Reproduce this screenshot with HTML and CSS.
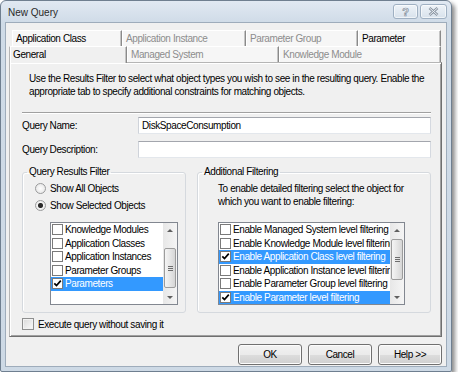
FILE: index.html
```html
<!DOCTYPE html>
<html lang="en">
<head>
    <meta charset="UTF-8">
    <title>New Query</title>
    <link rel="stylesheet" href="styles.css">
</head>
<body>
<div class="window">
    <div class="titlebar">
        <span class="title">New Query</span>
        <div class="caption-buttons">
            <button class="cap-btn help-btn">?</button>
            <button class="cap-btn close-btn">
                <svg width="11" height="9" viewBox="0 0 11 9">
                    <path d="M1.5 1 9.5 8 M9.5 1 1.5 8" stroke="#8893a0" stroke-width="2.6" fill="none"/>
                    <path d="M1.5 1 9.5 8 M9.5 1 1.5 8" stroke="#eef2f6" stroke-width="1" fill="none"/>
                </svg>
            </button>
        </div>
    </div>
    <div class="client">
        <div class="tabs">
            <div class="tab-row back">
                <div class="tab">Application Class</div>
                <div class="tab disabled">Application Instance</div>
                <div class="tab disabled">Parameter Group</div>
                <div class="tab">Parameter</div>
            </div>
            <div class="tab-row front">
                <div class="tab active">General</div>
                <div class="tab disabled">Managed System</div>
                <div class="tab disabled">Knowledge Module</div>
            </div>
        </div>
        <div class="panel">
            <p class="intro">Use the Results Filter to select what object types you wish to see in the resulting query. Enable the<br>appropriate tab to specify additional constraints for matching objects.</p>
            <div class="sep"></div>
            <div class="field">
                <label for="query_name">Query Name:</label>
                <input type="text" id="query_name" value="DiskSpaceConsumption">
            </div>
            <div class="field">
                <label for="query_description">Query Description:</label>
                <input type="text" id="query_description">
            </div>
            <div class="groups">
                <fieldset class="group results">
                    <legend>Query Results Filter</legend>
                    <div class="radio"><span class="dot"></span>Show All Objects</div>
                    <div class="radio checked"><span class="dot"></span>Show Selected Objects</div>
                    <div class="listbox">
                        <ul class="items">
                            <li class="item"><span class="box"></span>Knowledge Modules</li>
                            <li class="item"><span class="box"></span>Application Classes</li>
                            <li class="item"><span class="box"></span>Application Instances</li>
                            <li class="item"><span class="box"></span>Parameter Groups</li>
                            <li class="item selected"><span class="box"><svg width="9" height="9" viewBox="0 0 9 9"><path d="M1.3 4.3 3.5 6.6 7.8 1.6" stroke="#000" stroke-width="1.7" fill="none"/></svg></span>Parameters</li>
                        </ul>
                        <div class="scrollbar">
                            <div class="sb-arrow up"></div>
                            <div class="sb-track"><div class="sb-thumb thumb-results"><span class="grip"></span></div></div>
                            <div class="sb-arrow down"></div>
                        </div>
                    </div>
                </fieldset>
                <fieldset class="group filtering">
                    <legend>Additional Filtering</legend>
                    <p class="hint">To enable detailed filtering select the object for<br>which you want to enable filtering:</p>
                    <div class="listbox">
                        <ul class="items">
                            <li class="item"><span class="box"></span>Enable Managed System level filtering</li>
                            <li class="item"><span class="box"></span>Enable Knowledge Module level filtering</li>
                            <li class="item selected"><span class="box"><svg width="9" height="9" viewBox="0 0 9 9"><path d="M1.3 4.3 3.5 6.6 7.8 1.6" stroke="#000" stroke-width="1.7" fill="none"/></svg></span>Enable Application Class level filtering</li>
                            <li class="item"><span class="box"></span>Enable Application Instance level filtering</li>
                            <li class="item"><span class="box"></span>Enable Parameter Group level filtering</li>
                            <li class="item selected"><span class="box"><svg width="9" height="9" viewBox="0 0 9 9"><path d="M1.3 4.3 3.5 6.6 7.8 1.6" stroke="#000" stroke-width="1.7" fill="none"/></svg></span>Enable Parameter level filtering</li>
                        </ul>
                        <div class="scrollbar">
                            <div class="sb-arrow up"></div>
                            <div class="sb-track"><div class="sb-thumb thumb-filtering"><span class="grip"></span></div></div>
                            <div class="sb-arrow down"></div>
                        </div>
                    </div>
                </fieldset>
            </div>
            <div class="check-row"><span class="check"></span>Execute query without saving it</div>
        </div>
        <div class="actions">
            <button class="btn">OK</button>
            <button class="btn">Cancel</button>
            <button class="btn">Help &gt;&gt;</button>
        </div>
    </div>
</div>
</body>
</html>
```

FILE: styles.css
```css
body {
    margin: 0; background: #fff;
    font-family: "Liberation Sans", Arial, sans-serif; font-size: 10px; letter-spacing: -0.4px; color: #000;
}
.window {
    width: 452px; height: 372px; box-sizing: border-box; display: flex; flex-direction: column;
    border: 1px solid #6f7f90; border-radius: 6px 6px 2px 2px;
    background: linear-gradient(#e1e9f2, #cfdbe7 22px, #cdd9e5);
    box-shadow: 3px 3px 4px rgba(0, 0, 0, 0.45);
}
.titlebar { height: 21px; display: flex; align-items: center; justify-content: space-between; padding: 0 4px 0 7px; }
.title { font-size: 10px; letter-spacing: 0; color: #2a2a2a; margin-top: 2px; }
.caption-buttons { display: flex; gap: 2px; align-self: flex-start; margin-top: 3px; }
.cap-btn {
    height: 15px; padding: 0; border: 1px solid #9fb0c2; border-radius: 3px;
    background: linear-gradient(#eef3f8, #d8e2ec); display: flex; align-items: center; justify-content: center;
    box-shadow: inset 0 0 0 1px rgba(255, 255, 255, 0.6);
}
.help-btn { width: 25px; font: bold 11px "Liberation Sans", Arial, sans-serif; color: #eef2f6; -webkit-text-stroke: 0.7px #8893a0; }
.close-btn { width: 27px; }
.client {
    flex: 1; margin: 0 4px 4px 4px; border: 1px solid #9eacbb; background: #f0f0f0;
    padding: 7px 4px 0 3px; display: flex; flex-direction: column;
}
.tab-row { display: grid; height: 16px; }
.tab-row.back { grid-template-columns: 110px 124px 112px 83px; margin-left: 3px; }
.tab-row.front { grid-template-columns: 118px 152px 162px; }
.tab {
    box-sizing: border-box; padding-left: 3px; line-height: 15px; white-space: nowrap;
    background: #f6f6f6; border-top: 1px solid #fff; border-left: 1px solid #fff; border-right: 1px solid #8a8a8a;
    box-shadow: inset -1px 0 #c4c4c4;
}
.tab.disabled { color: #8d8d8d; }
.tab.active { background: #f0f0f0; height: 17px; position: relative; z-index: 1; border-left-color: #b5b5b5; box-shadow: inset 1px 0 #fff, inset -1px 0 #c4c4c4; }
.panel {
    border: 1px solid; border-color: #b5b5b5 #6f6f6f #6f6f6f #b5b5b5;
    box-shadow: inset 1px 1px #fff, inset -1px -1px #a0a0a0;
    padding: 0 10px 6px 12px;
}
.intro { margin: 9px 0 0 7px; line-height: 13px; white-space: nowrap; }
.sep { margin-top: 14px; border-top: 1px solid #a0a0a0; border-bottom: 1px solid #fff; }
.field { display: grid; grid-template-columns: 116px 1fr; align-items: center; margin-top: 3px; }
.field + .field { margin-top: 7px; }
.field input {
    height: 17px; box-sizing: border-box; margin: 0; padding: 0 3px; font: inherit; letter-spacing: inherit;
    border: 1px solid; border-color: #a3a6ad #d5d9e0 #e3e7ec #cfd3da; background: #fff;
}
.groups { display: grid; grid-template-columns: 164px 234px; gap: 11px; margin-top: 8px; }
.group {
    margin: 0; padding: 0 0 7px 0; min-width: 0;
    border: 1px solid #d5d9de; border-radius: 3px; box-shadow: inset 1px 1px #fff;
}
.group legend { margin-left: 4px; padding: 0 2px; line-height: 12px; }
.radio { display: flex; align-items: center; gap: 4px; height: 12px; margin: 4px 0 0 12px; }
.radio + .radio { margin-top: 5px; }
.dot {
    width: 11px; height: 11px; box-sizing: border-box; border-radius: 50%;
    border: 1px solid #9a9b9c; background: radial-gradient(circle, #fdfdfd, #e2e2e2);
}
.radio.checked .dot { background: radial-gradient(circle, #2b2b2b 0 2px, #6d6d6d 2.5px, #f4f4f4 3px, #e2e2e2); }
.listbox { display: flex; height: 83px; box-sizing: border-box; border: 1px solid #828790; background: #fff; }
.results .listbox { margin: 11px 7px 0 27px; }
.filtering .listbox { margin: 14px 25px 0 20px; }
.hint { margin: 4px 0 0 20px; line-height: 13px; white-space: nowrap; }
.items { list-style: none; margin: 0; padding: 0; flex: 1; min-width: 0; overflow: hidden; }
.item { height: 13.5px; display: flex; align-items: center; gap: 2px; padding-left: 1px; white-space: nowrap; }
.item.selected { background: #3399ff; color: #fff; }
.box {
    flex: none; width: 11px; height: 11px; box-sizing: border-box; border: 1px solid #7a7a7a; background: #fff;
    display: flex; align-items: center; justify-content: center;
}
.scrollbar { flex: none; width: 14px; display: flex; flex-direction: column; background: linear-gradient(90deg, #e7e7e7, #f5f5f5); }
.sb-arrow { height: 14px; display: flex; align-items: center; justify-content: center; }
.sb-arrow::before { content: ""; border-left: 3px solid transparent; border-right: 3px solid transparent; }
.sb-arrow.up::before { border-bottom: 3px solid #5f5f5f; }
.sb-arrow.down::before { border-top: 3px solid #5f5f5f; }
.sb-track { flex: 1; }
.sb-thumb {
    box-sizing: border-box; margin: 0 1px; border: 1px solid #9c9c9c; border-radius: 2px;
    background: linear-gradient(90deg, #f5f5f5, #e6e6e6 50%, #d6d6d6); display: flex; align-items: center; justify-content: center;
}
.thumb-results { margin-top: 11px; height: 40px; }
.thumb-filtering { margin-top: 2px; height: 41px; }
.grip { width: 5px; height: 1px; background: #6d6d6d; box-shadow: 0 -2px #6d6d6d, 0 2px #6d6d6d; }
.check-row { display: flex; align-items: center; gap: 4px; height: 12px; margin-top: 5px; }
.check {
    width: 12px; height: 12px; box-sizing: border-box; border: 1px solid #8e8f8f;
    background: linear-gradient(135deg, #d9d9d9, #fbfbfb); box-shadow: inset 0 0 0 1px #f2f2f2;
}
.actions { display: flex; justify-content: flex-end; gap: 6px; margin-top: 7px; padding-right: 0; }
.btn {
    width: 64px; height: 21px; padding: 0; font: inherit; letter-spacing: inherit; color: #000;
    border: 1px solid #707070; border-radius: 3px;
    background: linear-gradient(#f2f2f2, #ebebeb 50%, #dddddd 51%, #cfcfcf);
    box-shadow: inset 0 0 0 1px #fcfcfc;
}
```
